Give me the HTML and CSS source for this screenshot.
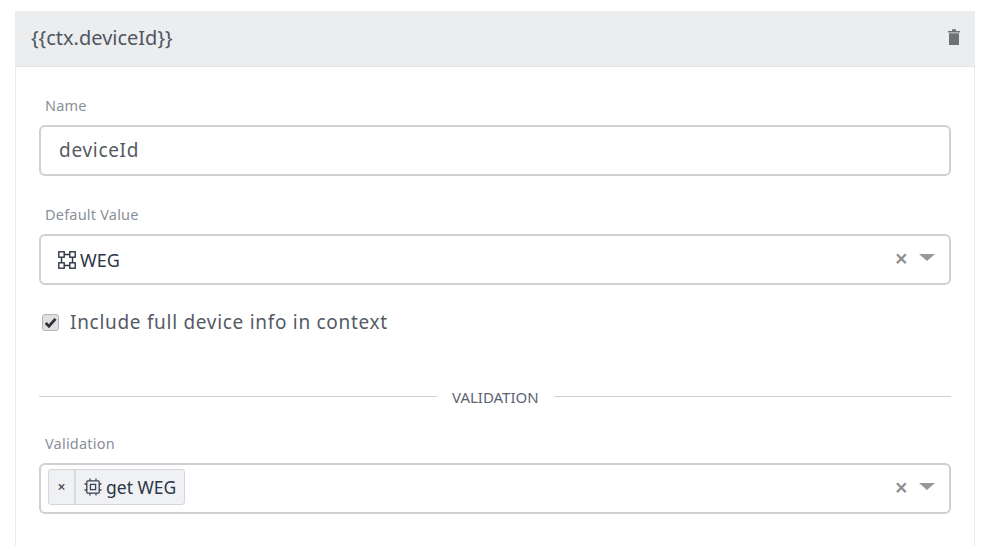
FILE: index.html
```html
<!DOCTYPE html>
<html lang="en">
<head>
<meta charset="utf-8">
<title>Entity alias</title>
<link rel="stylesheet" href="styles.css">
</head>
<body>
<section class="card">
  <header class="card-head">
    <span class="card-title">{{ctx.deviceId}}</span>
    <svg class="trash" viewBox="0 0 14 18" width="14" height="18"><path d="M1 3h12v1.4H1zM5 1.2h4V3H5zM2 5.2h10V17H2z"/></svg>
  </header>
  <div class="card-body">
    <div class="field">
      <label class="label">Name</label>
      <div class="control"><span class="value-lg">deviceId</span></div>
    </div>
    <div class="field">
      <label class="label">Default Value</label>
      <div class="control select">
        <svg class="ico" viewBox="0 0 18 18" width="18" height="18"><g fill="none" stroke="#2c3645" stroke-width="1.4"><rect x="0.8" y="0.8" width="5.4" height="5.4"/><rect x="11.8" y="0.8" width="5.4" height="5.4"/><rect x="0.8" y="11.8" width="5.4" height="5.4"/><rect x="11.8" y="11.8" width="5.4" height="5.4"/><path d="M6.2 3.5h5.6M6.2 14.5h5.6M3.5 6.2v5.6M14.5 6.2v5.6"/></g></svg>
        <span class="value">WEG</span>
        <span class="tools"><span class="clear">×</span><span class="caret"></span></span>
      </div>
    </div>
    <div class="check-row">
      <span class="checkbox"><svg viewBox="0 0 12 12" width="13" height="13"><path d="M1.6 6.4l3 3L10.6 2.6" fill="none" stroke="#2f3338" stroke-width="2.6"/></svg></span>
      <span class="check-label">Include full device info in context</span>
    </div>
    <div class="divider"><span class="divider-text">VALIDATION</span></div>
    <div class="field">
      <label class="label">Validation</label>
      <div class="control select multi">
        <span class="tag">
          <span class="tag-x">×</span>
          <span class="tag-text">
            <svg class="ico" viewBox="0 0 18 18" width="18" height="18"><g fill="none" stroke="#3a4453" stroke-width="1.3"><rect x="2.8" y="2.8" width="12.4" height="12.4" rx="1"/><rect x="6.4" y="6.4" width="5.2" height="5.2"/><path d="M6 0.5v2.3M12 0.5v2.3M6 15.2v2.3M12 15.2v2.3M0.5 6h2.3M0.5 12h2.3M15.2 6h2.3M15.2 12h2.3"/></g></svg>
            <span class="value tag-value">get WEG</span>
          </span>
        </span>
        <span class="tools"><span class="clear">×</span><span class="caret"></span></span>
      </div>
    </div>
  </div>
</section>
</body>
</html>
```

FILE: styles.css
```css
* { box-sizing: border-box; }
html, body { margin: 0; height: 100%; overflow: hidden; background: #fff; }
body {
  padding: 11px 13px 0 15px;
  font-family: "Noto Sans", "Open Sans", sans-serif;
  color: #4a5160;
}
.card {
  width: 960px;
  height: 535px;
  border-left: 1px solid #e9eaec;
  border-right: 1px solid #e9eaec;
}
.card-head {
  height: 56px;
  margin: 0 -1px;
  padding: 0 13px 3px 16px;
  background: #ecedef;
  border-bottom: 1px solid #e3e4e6;
  display: flex;
  align-items: center;
  justify-content: space-between;
}
.card-title { font-size: 20px; color: #4f5662; }
.trash { fill: #6f7173; margin-right: 1px; }
.card-body { padding: 27px 23px 0; }
.field { display: flex; flex-direction: column; }
.label {
  height: 21px;
  margin-bottom: 10px;
  padding-left: 6px;
  line-height: 23px;
  font-size: 14.5px;
  letter-spacing: 0.2px;
  color: #8a8f99;
}
.control {
  height: 51px;
  margin-bottom: 27px;
  border: 2px solid #cfd0d2;
  border-radius: 6px;
  padding: 0 18px 2px;
  display: flex;
  align-items: center;
  background: #fff;
}
.value-lg { font-size: 19px; color: #555a63; letter-spacing: 0.7px; }
.select { padding: 0 14px 0 17px; gap: 4px; }
.value { font-size: 18px; color: #2c3645; }
.tag-value { font-size: 17.5px; }
.tools { margin-left: auto; margin-bottom: 4px; display: flex; align-items: center; gap: 11px; }
.clear { font-size: 23px; line-height: 20px; color: #8d8e90; font-weight: 600; }
.caret {
  width: 0;
  height: 0;
  border-left: 8px solid transparent;
  border-right: 8px solid transparent;
  border-top: 7px solid #97989a;
}
.check-row {
  height: 26px;
  margin-top: -3px;
  display: flex;
  align-items: center;
  padding-left: 3px;
  gap: 11px;
}
.checkbox {
  width: 17px;
  height: 17px;
  border: 1px solid #b4b5b7;
  border-radius: 3px;
  background: #dfe0e2;
  display: flex;
  align-items: center;
  justify-content: center;
}
.check-label { font-size: 19px; color: #555a66; letter-spacing: 0.7px; }
.divider {
  margin-top: 51px;
  margin-bottom: 25px;
  height: 21px;
  display: flex;
  align-items: center;
  gap: 15px;
}
.divider::before, .divider::after {
  content: "";
  flex: 1 1 0;
  height: 1px;
  background: #cfd0d2;
}
.divider::before { flex: 0 0 398px; }
.divider-text { font-size: 15px; color: #5d6370; }
.multi { padding: 0 14px 4px 7px; gap: 0; }
.tag {
  height: 36px;
  display: flex;
  align-items: stretch;
  background: #eff1f4;
  border: 1px solid #d5d6d9;
  border-radius: 3px;
}
.tag-x {
  width: 27px;
  border-right: 2px solid #d9dadc;
  display: flex;
  align-items: center;
  justify-content: center;
  font-size: 14px;
  font-weight: 600;
  color: #4a4d52;
}
.tag-text { display: flex; align-items: center; gap: 4px; padding: 0 8px 0 8px; }
.multi .tools { margin-bottom: 0; }
```
